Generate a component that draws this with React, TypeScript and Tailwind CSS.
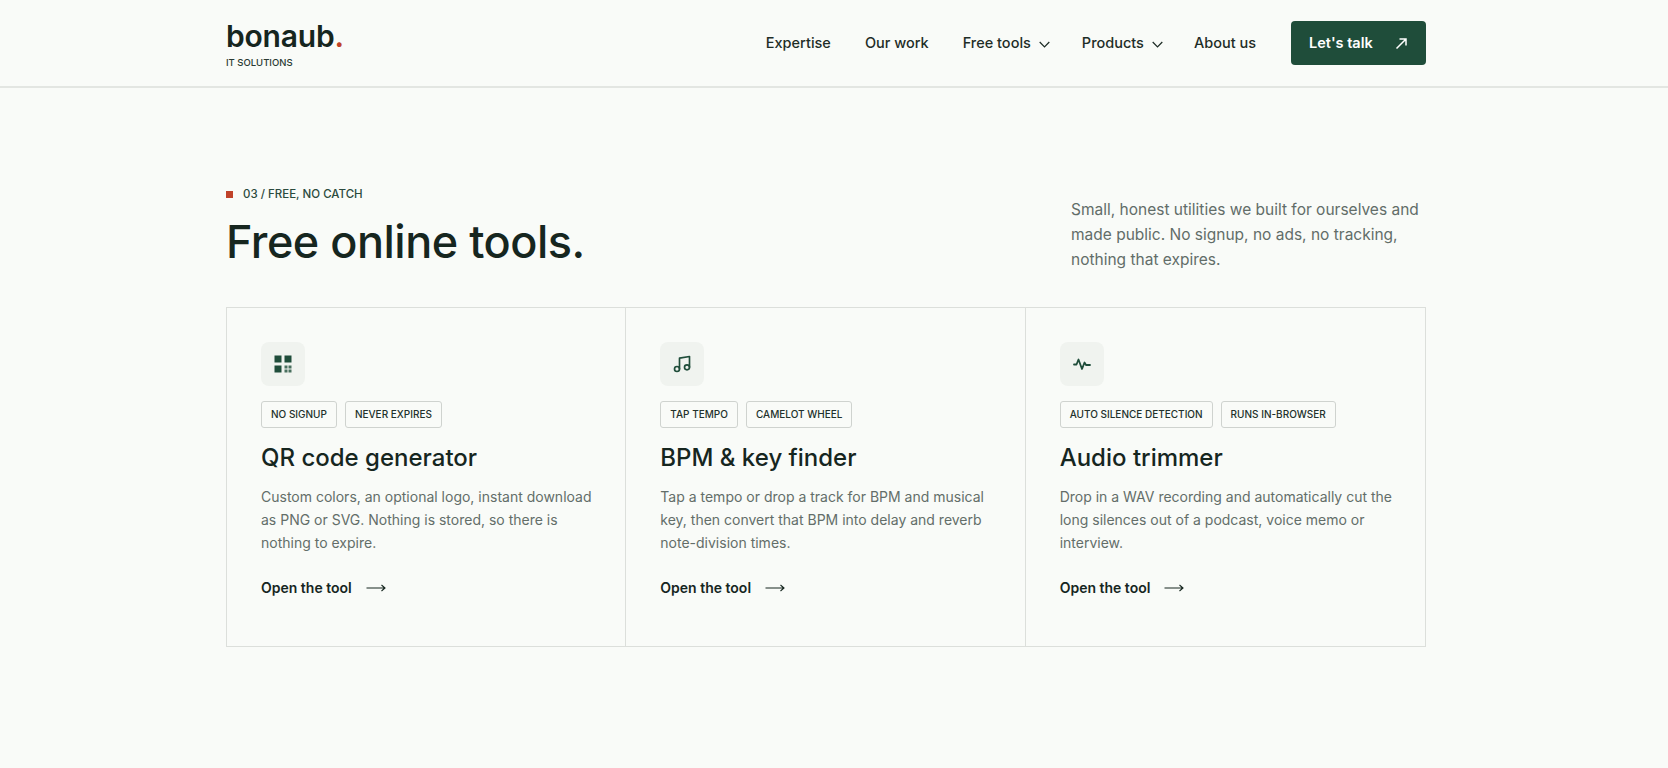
const tools = [
  {
    title: "QR code generator",
    tags: ["NO SIGNUP", "NEVER EXPIRES"],
    lines: ["Custom colors, an optional logo, instant download", "as PNG or SVG. Nothing is stored, so there is", "nothing to expire."],
    icon: (
      <svg width="18" height="18" viewBox="0 0 18 18" fill="#1f4d3a">
        <rect x="0.5" y="0.5" width="7" height="7" />
        <rect x="10.5" y="0.5" width="7" height="7" />
        <rect x="0.5" y="10.5" width="7" height="7" />
        <rect x="10.5" y="10.5" width="3" height="3" opacity="0.8" />
        <rect x="14.5" y="10.5" width="3" height="3" opacity="0.8" />
        <rect x="10.5" y="14.5" width="3" height="3" opacity="0.8" />
        <rect x="14.5" y="14.5" width="3" height="3" opacity="0.8" />
      </svg>
    ),
  },
  {
    title: "BPM & key finder",
    tags: ["TAP TEMPO", "CAMELOT WHEEL"],
    lines: ["Tap a tempo or drop a track for BPM and musical", "key, then convert that BPM into delay and reverb", "note-division times."],
    icon: (
      <svg width="20" height="20" viewBox="0 0 24 24" fill="none" stroke="#1f4d3a" strokeWidth="2" strokeLinecap="round" strokeLinejoin="round">
        <path d="M9 18V5l12-2v13" />
        <circle cx="6" cy="18" r="3" />
        <circle cx="18" cy="16" r="3" />
      </svg>
    ),
  },
  {
    title: "Audio trimmer",
    tags: ["AUTO SILENCE DETECTION", "RUNS IN-BROWSER"],
    lines: ["Drop in a WAV recording and automatically cut the", "long silences out of a podcast, voice memo or", "interview."],
    icon: (
      <svg width="18" height="14" viewBox="0 0 18 14" fill="none" stroke="#1f4d3a" strokeWidth="1.8" strokeLinecap="round" strokeLinejoin="round">
        <path d="M1 7.5h2.5L5.5 2.5 9 12l2.5-6.5 1.5 2.5H17" />
      </svg>
    ),
  },
];

function Chevron() {
  return (
    <svg width="11" height="7" viewBox="0 0 11 7" fill="none" stroke="#1b2a24" strokeWidth="1.2" className="mt-[3px]">
      <path d="M0.7 1l4.8 5 4.8-5" />
    </svg>
  );
}

export default function App() {
  return (
    <div className="min-h-[768px] bg-[#f9fbf8] text-[#17251f] font-['Inter','Liberation_Sans',sans-serif]">
      <header className="h-[88px] border-b-2 border-[#e3e6e2]">
        <div className="mx-auto flex h-full w-[1200px] translate-x-[-8px] items-center justify-between">
          <div className="pt-[2px]">
            <div className="text-[30px] leading-[34px] font-semibold tracking-[-0.2px] text-[#16261f]">
              bonaub<span className="text-[#c0432a]">.</span>
            </div>
            <div className="mt-[4px] text-[9.5px] leading-[12px] font-medium text-[#2a3a33]">IT SOLUTIONS</div>
          </div>
          <nav className="flex items-center text-[14.5px] font-medium text-[#1e2d27]">
            <span className="ml-0">Expertise</span>
            <span className="ml-[34px]">Our work</span>
            <span className="ml-[34px] flex items-center gap-[8px]">Free tools <Chevron /></span>
            <span className="ml-[32px] flex items-center gap-[8px]">Products <Chevron /></span>
            <span className="ml-[31px]">About us</span>
            <span className="ml-[35px] flex h-[44px] w-[135px] items-center justify-between rounded-[4px] bg-[#1f4d3a] pr-[18px] pl-[18px] font-semibold text-white">
              Let's talk
              <svg width="13" height="13" viewBox="0 0 13 13" fill="none" stroke="#fff" strokeWidth="1.5">
                <path d="M1.5 11.5L11 2M4.5 2H11V8.5" />
              </svg>
            </span>
          </nav>
        </div>
      </header>
      <main className="mx-auto w-[1200px] translate-x-[-8px]">
        <div className="flex items-start justify-between pt-[99px]">
          <div>
            <div className="flex items-center text-[11.5px] leading-[14px] font-medium text-[#2b4a3d]">
              <span className="mr-[10px] size-[7px] bg-[#c0432a]" />
              03 / FREE, NO CATCH
            </div>
            <h1 className="mt-[13px] text-[45px] leading-[56px] font-medium tracking-[-0.5px] text-[#16261f]">Free online tools.</h1>
          </div>
          <p className="mt-[10px] w-[355px] text-[15.5px] leading-[25px] text-[#626d68]">
            Small, honest utilities we built for ourselves and<br />made public. No signup, no ads, no tracking,<br />nothing that expires.
          </p>
        </div>
        <div className="mt-[35px] grid h-[340px] grid-cols-3 border border-[#dcdfdb]">
          {tools.map((t, i) => (
            <div key={t.title} className={`px-[34px] pt-[34px] ${i < 2 ? "border-r border-[#dcdfdb]" : ""}`}>
              <div className="flex size-[44px] items-center justify-center rounded-[8px] bg-[#f0f3ef]">{t.icon}</div>
              <div className="mt-[15px] flex gap-[8px]">
                {t.tags.map((x) => (
                  <span key={x} className="flex h-[27px] items-center rounded-[3px] border border-[#cfd3cf] px-[9px] text-[10px] font-medium text-[#22312b]">{x}</span>
                ))}
              </div>
              <h2 className="mt-[14px] text-[24px] leading-[32px] font-medium text-[#16261f]">{t.title}</h2>
              <p className="mt-[11px] text-[14px] leading-[23px] text-[#636e69]">
                {t.lines.map((l) => (
                  <span key={l} className="block whitespace-nowrap">{l}</span>
                ))}
              </p>
              <div className="mt-[23px] flex items-center gap-[14px] text-[14px] font-semibold text-[#16261f]">
                Open the tool
                <svg width="20" height="10" viewBox="0 0 20 10" fill="none" stroke="#16261f" strokeWidth="1.1">
                  <path d="M0.5 5H19M15.5 2l3.5 3-3.5 3" />
                </svg>
              </div>
            </div>
          ))}
        </div>
      </main>
    </div>
  );
}
